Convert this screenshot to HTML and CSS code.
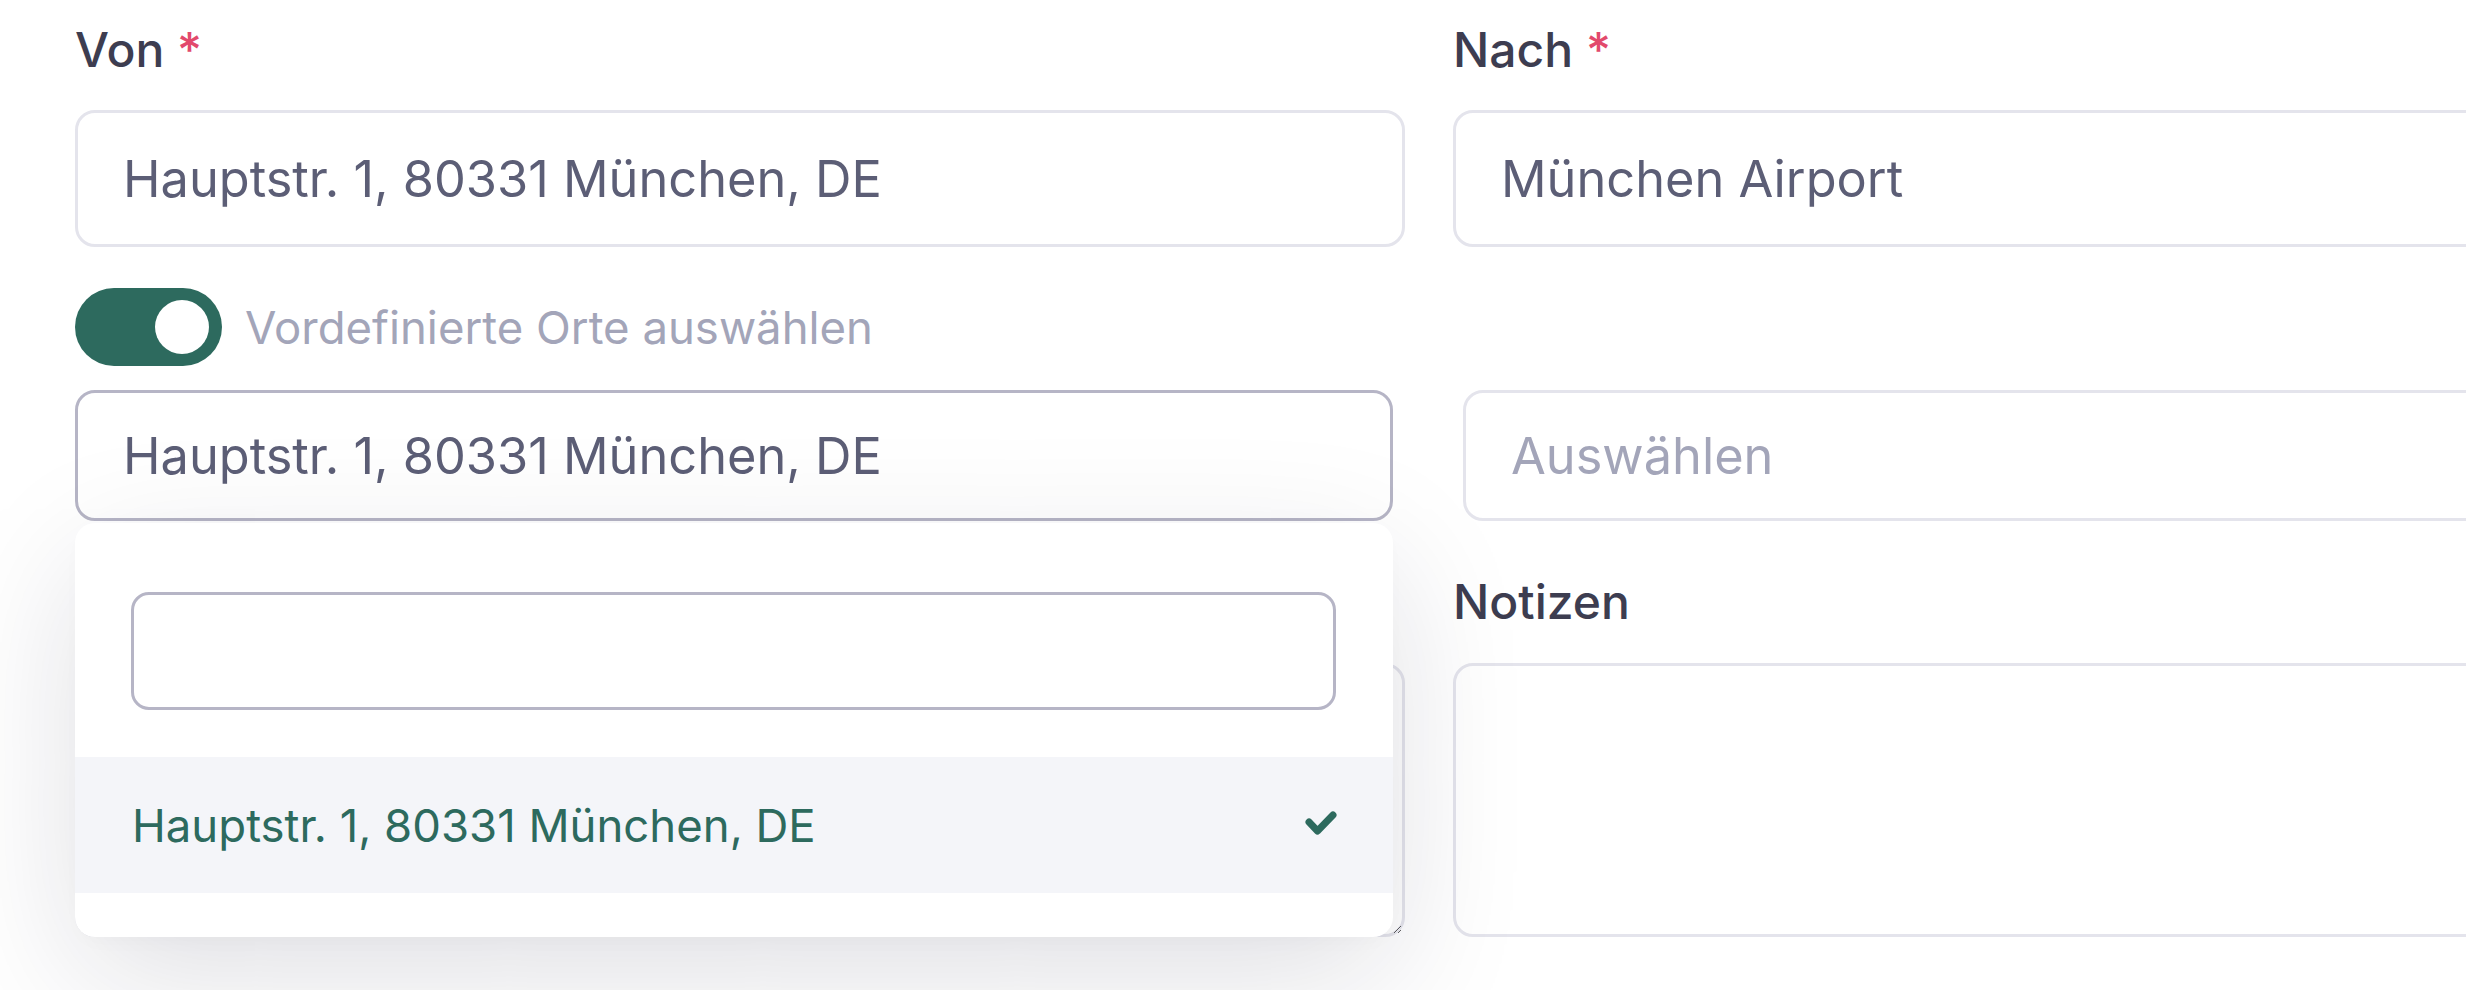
FILE: index.html
```html
<!DOCTYPE html>
<html lang="de">
<head>
<meta charset="utf-8">
<title>Fahrt</title>
<link rel="stylesheet" href="styles.css">
</head>
<body>
<div class="form">
  <div class="label">Von <span class="req">*</span></div>
  <div class="label">Nach <span class="req">*</span></div>

  <div class="input">Hauptstr. 1, 80331 München, DE</div>
  <div class="input">München Airport</div>

  <div class="toggle-row">
    <span class="toggle"><span class="knob"></span></span>
    <span class="toggle-label">Vordefinierte Orte auswählen</span>
  </div>
  <div class="toggle-spacer"></div>

  <div class="select-wrap">
    <div class="select open">Hauptstr. 1, 80331 München, DE</div>
    <div class="panel">
      <div class="search"></div>
      <div class="option">
        <span>Hauptstr. 1, 80331 München, DE</span>
        <svg class="check" width="40" height="32" viewBox="0 0 40 32"><polyline points="6,13 14.5,22 30,6" fill="none" stroke="#2d6a5e" stroke-width="7" stroke-linecap="round" stroke-linejoin="round"/></svg>
      </div>
    </div>
  </div>
  <div class="select-wrap right">
    <div class="select placeholder">Auswählen</div>
  </div>

  <div class="label second"></div>
  <div class="label second">Notizen</div>

  <textarea class="area"></textarea>
  <textarea class="area"></textarea>
</div>
</body>
</html>
```
FILE: styles.css
```css
html, body {
  margin: 0;
  padding: 0;
  background: #ffffff;
  overflow: hidden;
  width: 2466px;
  height: 990px;
}

.form {
  display: grid;
  grid-template-columns: 1330px 1330px;
  column-gap: 48px;
  padding: 14px 0 0 75px;
  font-family: Inter, "Noto Sans", sans-serif;
}

.label {
  font-size: 48px;
  line-height: 72px;
  height: 72px;
  font-weight: 500;
  color: #3d3d50;
}

.label.second {
  margin-top: 45px;
}

.req {
  color: #e2496c;
}

.input {
  margin-top: 24px;
  height: 137px;
  box-sizing: border-box;
  border: 3px solid #e4e4ec;
  border-radius: 20px;
  padding: 0 45px;
  display: flex;
  align-items: center;
  font-size: 50.5px;
  color: #5c5e76;
  background: #fff;
}

.toggle-row {
  margin-top: 41px;
  height: 78px;
  display: flex;
  align-items: center;
  gap: 23px;
}

.toggle-spacer {
  margin-top: 41px;
  height: 78px;
}

.toggle {
  width: 147px;
  height: 78px;
  border-radius: 39px;
  background: #2d6a5e;
  display: flex;
  align-items: center;
  justify-content: flex-end;
  padding-right: 13px;
  box-sizing: border-box;
}

.knob {
  width: 54px;
  height: 54px;
  border-radius: 50%;
  background: #ffffff;
}

.toggle-label {
  font-size: 45.5px;
  color: #a3a5b9;
}

.select-wrap {
  margin-top: 24px;
  position: relative;
}

.select-wrap.right {
  padding-left: 10px;
}

.select {
  height: 131px;
  box-sizing: border-box;
  border: 3px solid #e4e4ec;
  border-radius: 20px;
  padding: 0 45px;
  display: flex;
  align-items: center;
  font-size: 50.5px;
  color: #5c5e76;
  background: #fff;
}

.select.open {
  border-color: #b6b5c6;
  margin-right: 12px;
}

.select.placeholder {
  color: #a3a5b9;
}

.panel {
  position: absolute;
  z-index: 10;
  left: 0;
  right: 12px;
  top: calc(100% + 2px);
  height: 414px;
  box-sizing: border-box;
  background: #ffffff;
  border-radius: 20px;
  padding-top: 69px;
  box-shadow: 0 40px 140px -4px rgba(20, 20, 50, 0.14), 0 8px 24px -8px rgba(20, 20, 50, 0.03);
}

.search {
  margin: 0 57px 0 56px;
  height: 118px;
  box-sizing: border-box;
  border: 3px solid #b6b5c6;
  border-radius: 18px;
  background: #fff;
}

.option {
  margin-top: 47px;
  height: 136px;
  background: #f4f5f9;
  display: flex;
  align-items: center;
  justify-content: space-between;
  padding: 0 50px 0 57px;
  font-size: 45.5px;
  color: #2d6a5e;
}

.check {
  display: block;
}

.area {
  display: block;
  margin: 25px 0 0 0;
  width: 100%;
  height: 274px;
  box-sizing: border-box;
  border: 3px solid #e4e4ec;
  border-radius: 20px;
  background: #fff;
  font-family: Inter, sans-serif;
  font-size: 48px;
  padding: 20px 46px;
  outline: none;
}
```
